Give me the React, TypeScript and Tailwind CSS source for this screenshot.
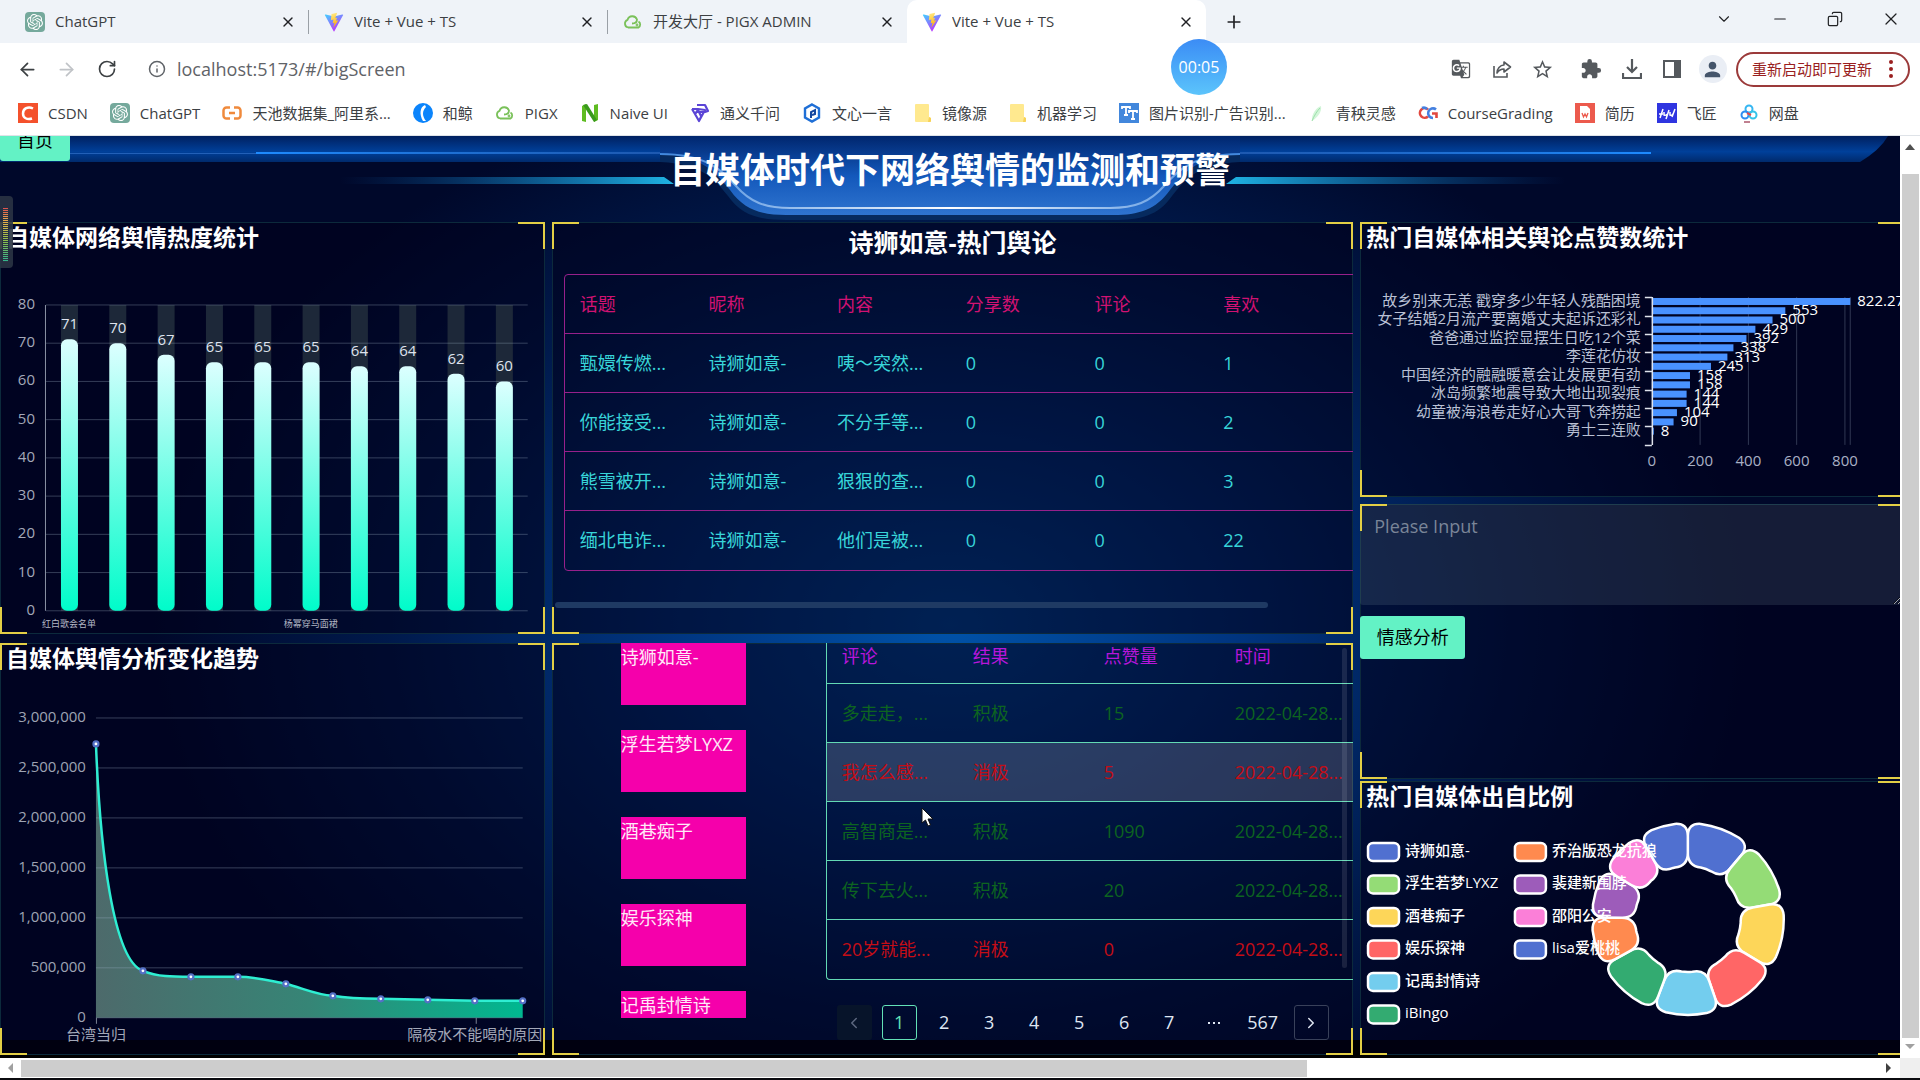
import type { ReactNode } from 'react';
import {
  ArrowLeft,
  ArrowRight,
  ChevronDown,
  ChevronLeft,
  ChevronRight,
  Copy,
  Info,
  Minus,
  Plus,
  RotateCw,
  X,
} from 'lucide-react';
import { MdExtension, MdGTranslate, MdPerson, MdStarBorder } from 'react-icons/md';
import { SiOpenai } from 'react-icons/si';

/* ---------- small site icons ---------- */

const GptIcon = () => (
  <span className="flex h-5 w-5 items-center justify-center rounded bg-[#75a99c] text-white">
    <SiOpenai size={16} />
  </span>
);

const ViteIcon = () => (
  <svg width="20" height="20" viewBox="0 0 32 32">
    <defs>
      <linearGradient id="viteA" x1="0" y1="0" x2="0.6" y2="1">
        <stop offset="0" stopColor="#41d1ff" />
        <stop offset="1" stopColor="#bd34fe" />
      </linearGradient>
      <linearGradient id="viteB" x1="0.4" y1="0" x2="0.6" y2="1">
        <stop offset="0" stopColor="#ffea83" />
        <stop offset="1" stopColor="#ffa800" />
      </linearGradient>
    </defs>
    <path d="M30 6 17 30a1 1 0 0 1-2 0L2 6a1 1 0 0 1 1-2l13 3 13-3a1 1 0 0 1 1 2z" fill="url(#viteA)" />
    <path d="M21 1 12 3l-1 10 4-1-1 6 3-1-2 8 8-12-4 1 2-5-3 1z" fill="url(#viteB)" />
  </svg>
);

const CloudIcon = () => (
  <svg width="20" height="20" viewBox="0 0 20 20" fill="none" stroke="#7ac15a" strokeWidth="1.8">
    <path d="M5 15.500a4 4 0 0 1-.5-7.600A5 5 0 0 1 14 7.500c0 3-2 4-5 4M5 15.500h10.500a3.500 3.500 0 0 0 0-6" />
    <circle cx="14" cy="13" r="0.500" />
  </svg>
);

const CsdnIcon = () => (
  <svg width="20" height="20" viewBox="0 0 20 20">
    <rect width="20" height="20" fill="#f4512c" />
    <path d="M15 5.500c-5-2.500-10 0-10 5 0 4.500 4 6.500 9 5" fill="none" stroke="#fff" strokeWidth="2.500" />
  </svg>
);

const TianchiIcon = () => (
  <svg width="20" height="20" viewBox="0 0 20 20" fill="none" stroke="#f08a3c" strokeWidth="2.500">
    <path d="M8 4.500H4.500A3 3 0 0 0 1.500 7.500v5a3 3 0 0 0 3 3H8M12 4.500h3.500a3 3 0 0 1 3 3v5a3 3 0 0 1-3 3H12M7 10h6" />
  </svg>
);

const WhaleIcon = () => (
  <svg width="20" height="20" viewBox="0 0 20 20">
    <circle cx="10" cy="10" r="10" fill="#0b84fb" />
    <path d="M12 2C7 4 6 11 10 18h3C9 13 9 8 13 4z" fill="#fff" />
  </svg>
);

const NaiveIcon = () => (
  <svg width="20" height="20" viewBox="0 0 20 20">
    <path d="M2 3l4-2v18l-4-1zM14 2l4-1v16l-4 2z" fill="#5fbc21" />
    <path d="M3 2l4-1 10 16-3 2z" fill="#3a9a1c" />
  </svg>
);

const TongyiIcon = () => (
  <svg width="20" height="20" viewBox="0 0 20 20" fill="none" stroke="#5b45d6" strokeWidth="2.200" strokeLinejoin="round">
    <path d="M7 2h8l3 6-3 1-7 0M2 6h6l7 1-6 11M2 6l3 5 3-4 3 6M5 11l4 7 3-6" />
  </svg>
);

const YiyanIcon = () => (
  <svg width="20" height="20" viewBox="0 0 20 20" fill="none" stroke="#1f6fd6" strokeWidth="2.400">
    <path d="M10 1.500l7 4v9l-7 4-7-4v-9z" />
    <path d="M9 15V9l4-2v4l-3 1" stroke="#15479f" strokeWidth="2" />
  </svg>
);

const FolderIcon = () => (
  <svg width="18" height="20" viewBox="0 0 18 20">
    <path d="M2 1h12a1 1 0 0 1 1 1v12l2 1v3a1 1 0 0 1-1 1H2a1 1 0 0 1-1-1V2a1 1 0 0 1 1-1z" fill="#ffe98f" />
    <path d="M15 14l2 1v3a1 1 0 0 1-1 1h-2z" fill="#f7d257" />
  </svg>
);

const TtIcon = () => (
  <svg width="20" height="20" viewBox="0 0 20 20">
    <rect width="20" height="20" fill="#4287dc" />
    <path d="M3 6V4h8v2M7 4v8M5 12h4M10 10V8h8v2M14 8v8M12 16h4" fill="none" stroke="#fff" strokeWidth="1.800" />
  </svg>
);

const LeafIcon = () => (
  <svg width="18" height="20" viewBox="0 0 18 20">
    <path d="M4 18C3 11 9 4 13 3c1 6-3 11-9 15z" fill="#d3f5d9" />
    <path d="M4 18c2-5 5-10 8-13" stroke="#9be0aa" fill="none" />
  </svg>
);

const CgIcon = () => (
  <svg width="20" height="20" viewBox="0 0 20 20" fill="none" strokeWidth="2.600">
    <path d="M10 6.500a4.800 4.800 0 1 0 0 7" stroke="#e2483f" />
    <path d="M18 6.500a4.800 4.800 0 1 0-3 8.500M4 5a4.500 4.500 0 0 1 5 1" stroke="#4480e0" />
    <path d="M14 10.500h4.500V15" stroke="#e2483f" />
  </svg>
);

const WpsIcon = () => (
  <svg width="20" height="20" viewBox="0 0 20 20">
    <rect width="20" height="20" fill="#ec5a4d" />
    <path d="M5 3h7l3 3v11H5z" fill="#fff" />
    <path d="M7 10l1.500 4 1.500-3 1.500 3L13 10" fill="none" stroke="#ec5a4d" strokeWidth="1.300" />
  </svg>
);

const FeijiangIcon = () => (
  <svg width="20" height="20" viewBox="0 0 20 20">
    <rect width="20" height="20" fill="#2f35e0" />
    <path d="M2 11h4M3 15l3-9M7 9v3q2 1 3-1M9 16l3-9M13 9v3q2 1 3-1M15 14l3-8" stroke="#fff" strokeWidth="1.500" fill="none" />
  </svg>
);

const PanIcon = () => (
  <svg width="20" height="20" viewBox="0 0 20 20" fill="none" strokeWidth="2">
    <circle cx="10" cy="6" r="3.500" stroke="#35b6f2" />
    <circle cx="6" cy="12" r="3.500" stroke="#2d8cf0" />
    <circle cx="14" cy="12" r="3.500" stroke="#35c3e8" />
    <path d="M8 10l4 2" stroke="#e5484d" />
    <path d="M5 19h6" stroke="#c08090" />
  </svg>
);

/* ---------- browser chrome ---------- */

const tabs = [
  { title: 'ChatGPT', icon: <GptIcon /> },
  { title: 'Vite + Vue + TS', icon: <ViteIcon /> },
  { title: '开发大厅 - PIGX ADMIN', icon: <CloudIcon /> },
  { title: 'Vite + Vue + TS', icon: <ViteIcon />, active: true },
];

const bookmarks = [
  { name: 'CSDN', icon: <CsdnIcon /> },
  { name: 'ChatGPT', icon: <GptIcon /> },
  { name: '天池数据集_阿里系...', icon: <TianchiIcon /> },
  { name: '和鲸', icon: <WhaleIcon /> },
  { name: 'PIGX', icon: <CloudIcon /> },
  { name: 'Naive UI', icon: <NaiveIcon /> },
  { name: '通义千问', icon: <TongyiIcon /> },
  { name: '文心一言', icon: <YiyanIcon /> },
  { name: '镜像源', icon: <FolderIcon /> },
  { name: '机器学习', icon: <FolderIcon /> },
  { name: '图片识别-广告识别...', icon: <TtIcon /> },
  { name: '青秧灵感', icon: <LeafIcon /> },
  { name: 'CourseGrading', icon: <CgIcon /> },
  { name: '简历', icon: <WpsIcon /> },
  { name: '飞匠', icon: <FeijiangIcon /> },
  { name: '网盘', icon: <PanIcon /> },
];

function TabStrip() {
  return (
    <div className="flex h-[43px] items-stretch bg-[#eff3f8] pl-[10px] text-[15px] text-[#3c4043]">
      {tabs.map((tab, i) => (
        <div
          key={i}
          className={
            tab.active
              ? 'flex w-[299px] items-center rounded-t-[10px] bg-white pr-[12px] pl-[15px]'
              : 'flex w-[299px] items-center pr-[12px] pl-[15px]'
          }
        >
          <span className="mr-[10px] flex w-5 justify-center">{tab.icon}</span>
          <span className="flex-1 truncate">{tab.title}</span>
          <button aria-label="关闭标签页" className="text-[#202124]">
            <X size={16} />
          </button>
          {i < 2 && <span className="ml-[12px] -mr-[12px] h-6 w-px bg-[#9aa0a6]" />}
        </div>
      ))}
      <button aria-label="新标签页" className="ml-[18px] text-[#202124]">
        <Plus size={20} />
      </button>
      <div className="ml-auto flex items-center gap-[38px] pr-[19px] pb-[6px] text-[#202124]">
        <button aria-label="搜索标签页"><ChevronDown size={18} strokeWidth={1.500} /></button>
        <button aria-label="最小化"><Minus size={18} strokeWidth={1.500} /></button>
        <button aria-label="还原"><Copy size={16} strokeWidth={1.800} className="-scale-x-100" /></button>
        <button aria-label="关闭"><X size={20} strokeWidth={1.500} /></button>
      </div>
    </div>
  );
}

function Toolbar() {
  return (
    <div className="relative flex h-[52px] items-center bg-white pr-[10px] pl-[17px] text-[#5f6368]">
      <button aria-label="后退" className="text-[#3c4043]"><ArrowLeft size={21} /></button>
      <button aria-label="前进" className="ml-[18px] text-[#c0c3c7]"><ArrowRight size={21} /></button>
      <button aria-label="重新加载" className="ml-[20px] text-[#3c4043]"><RotateCw size={20} /></button>
      <Info size={18} className="ml-[31px]" />
      <input
        aria-label="地址"
        defaultValue="localhost:5173/#/bigScreen"
        className="ml-[11px] min-w-0 flex-1 bg-transparent text-[18px] outline-none"
      />
      <div className="flex items-center text-[#55595d]">
        <button aria-label="翻译"><MdGTranslate size={20} /></button>
        <button aria-label="分享" className="ml-[21px]">
          <svg width="20" height="20" viewBox="0 0 20 20" fill="none" stroke="currentColor" strokeWidth="1.600">
            <path d="M2 7v11h13v-4" />
            <path d="M12 3l6.500 5-6.500 5v-3c-3 0-5 1-7 4 0-4 3-8 7-8z" strokeLinejoin="round" />
          </svg>
        </button>
        <button aria-label="收藏" className="ml-[19px]"><MdStarBorder size={23} /></button>
        <button aria-label="扩展程序" className="ml-[26px]"><MdExtension size={22} /></button>
        <button aria-label="下载" className="ml-[20px]">
          <svg width="20" height="20" viewBox="0 0 20 20" fill="none" stroke="currentColor" strokeWidth="2.200">
            <path d="M10 0v12M5 8l5 5 5-5M1 14v5h18v-5" />
          </svg>
        </button>
        <button aria-label="侧边栏" className="ml-[21px]">
          <svg width="18" height="18" viewBox="0 0 18 18">
            <path d="M1 1h16v16H1z" fill="none" stroke="currentColor" strokeWidth="2" />
            <path d="M11 1h6v16h-6z" fill="currentColor" />
          </svg>
        </button>
        <button aria-label="个人资料" className="ml-[18px] flex h-7 w-7 items-center justify-center rounded-full bg-[#eaeef5] text-[#44546a]">
          <MdPerson size={23} />
        </button>
        <button className="ml-[9px] flex h-[35px] items-center rounded-full border-2 border-[#9b3a3a] pr-[15px] pl-[14px] text-[15px] text-[#9a1f1f]">
          重新启动即可更新
          <svg width="4" height="18" viewBox="0 0 4 18" fill="currentColor" className="ml-[17px]">
            <circle cx="2" cy="2" r="2" />
            <circle cx="2" cy="9" r="2" />
            <circle cx="2" cy="16" r="2" />
          </svg>
        </button>
      </div>
      {/* screen recorder bubble */}
      <div className="absolute top-[-4px] left-[1171px] flex h-14 w-14 items-center justify-center rounded-full bg-linear-to-b from-[#3c8cf5] to-[#5cc4fb] text-[16px] text-white">
        00:05
      </div>
    </div>
  );
}

function BookmarkBar() {
  return (
    <nav className="flex h-[41px] items-center gap-[22px] overflow-hidden border-b border-[#dfe3e8] bg-white pb-[4px] pl-[18px] text-[15px] text-[#3c4043]">
      {bookmarks.map((b, i) => (
        <a key={i} href="#" className="flex shrink-0 items-center gap-[10px] whitespace-nowrap">
          {b.icon}
          {b.name}
        </a>
      ))}
    </nav>
  );
}

/* ---------- dashboard ---------- */

function Panel({ className = '', children }: { className?: string; children: ReactNode }) {
  return (
    <section className={`relative overflow-hidden bg-[#00001a]/60 shadow-[inset_0_0_0_1px_#0c2a3c] ${className}`}>
      {children}
      <i className="pointer-events-none absolute top-0 left-0 h-[27px] w-[27px] border-t-2 border-l-2 border-[#e3cf45]" />
      <i className="pointer-events-none absolute top-0 right-0 h-[27px] w-[27px] border-t-2 border-r-2 border-[#e3cf45]" />
      <i className="pointer-events-none absolute bottom-0 left-0 h-[27px] w-[27px] border-b-2 border-l-2 border-[#e3cf45]" />
      <i className="pointer-events-none absolute right-0 bottom-0 h-[27px] w-[27px] border-r-2 border-b-2 border-[#e3cf45]" />
    </section>
  );
}

const PanelTitle = ({ children }: { children: ReactNode }) => (
  <h2 className="pl-[6px] text-[23px] leading-[30px] font-bold text-white">{children}</h2>
);

function Banner() {
  return (
    <header className="relative h-[86px]">
      <svg className="absolute inset-0 h-full w-full" viewBox="0 0 1900 86" preserveAspectRatio="none">
        <defs>
          <linearGradient id="band" x1="0" y1="0" x2="0" y2="1">
            <stop offset="0" stopColor="#002060" />
            <stop offset="0.6" stopColor="#00409a" />
            <stop offset="1" stopColor="#002a6c" />
          </linearGradient>
          <linearGradient id="tray" x1="0" y1="0" x2="0" y2="1">
            <stop offset="0" stopColor="#00266e" />
            <stop offset="0.5" stopColor="#1358bb" />
            <stop offset="1" stopColor="#2f74cf" />
          </linearGradient>
          <linearGradient id="lineL">
            <stop offset="0" stopColor="#1e8bff" />
            <stop offset="1" stopColor="#2a62b8" stopOpacity="0.700" />
          </linearGradient>
          <linearGradient id="lineR">
            <stop offset="0" stopColor="#2a62b8" stopOpacity="0.700" />
            <stop offset="1" stopColor="#1e8bff" />
          </linearGradient>
          <linearGradient id="cyanL">
            <stop offset="0" stopColor="#0a5cb0" stopOpacity="0" />
            <stop offset="1" stopColor="#1fb4e4" />
          </linearGradient>
          <linearGradient id="cyanR">
            <stop offset="0" stopColor="#1fb4e4" />
            <stop offset="1" stopColor="#0a5cb0" stopOpacity="0" />
          </linearGradient>
          <linearGradient id="trayEdge">
            <stop offset="0" stopColor="#3f86dc" />
            <stop offset="0.5" stopColor="#ffffff" />
            <stop offset="1" stopColor="#3f86dc" />
          </linearGradient>
        </defs>
        <path d="M0 0H1888Q1880 14 1860 26H0z" fill="url(#band)" />
        <path d="M0 17H256V18H0z" fill="#2260b8" />
        <path d="M256 16H680V18H256z" fill="url(#lineL)" />
        <path d="M1220 16H1651V18H1220z" fill="url(#lineR)" />
        <path d="M340 41H664L674 48H340z" fill="url(#cyanL)" />
        <path d="M1236 41H1565V48H1226z" fill="url(#cyanR)" />
        <path d="M660 0H1240V26C1194 28 1184 46 1172 60C1158 80 1140 84 1114 84H786C760 84 742 80 728 60C716 46 706 28 660 26z" fill="#062a5e" />
        <path d="M660 0H1240V18C1194 20 1182 40 1170 54C1156 74 1138 79 1114 79H786C762 79 744 74 730 54C718 40 706 20 660 18z" fill="url(#tray)" />
        <path d="M660 18C706 18 722 34 736 50C750 66 765 72 790 72H1110C1135 72 1150 66 1164 50C1178 34 1194 18 1240 18" fill="none" stroke="url(#trayEdge)" strokeWidth="2" />
      </svg>
      <h1 className="relative pt-[12px] text-center text-[35px] leading-[44px] font-bold text-white">
        自媒体时代下网络舆情的监测和预警
      </h1>
      <button className="absolute top-0 left-0 h-[25px] w-[70px] rounded-b-[3px] bg-[#63f2c5] text-[18px] leading-[8px] text-black">
        <span className="block h-full overflow-hidden">首页</span>
      </button>
    </header>
  );
}

const heatData = [71, 70, 67, 65, 65, 65, 64, 64, 62, 60];

function HeatChart() {
  return (
    <svg viewBox="0 30 545 382" className="block w-full" fontSize="15">
      <defs>
        <linearGradient id="heat" x1="0" y1="0" x2="0" y2="1">
          <stop offset="0" stopColor="#dcffff" />
          <stop offset="1" stopColor="#00fcca" />
        </linearGradient>
      </defs>
      {heatData.map((_, i) => (
        <rect key={i} x={61 + i * 48.35} y="83" width="17" height="306" fill="#1d2839" />
      ))}
      {[0, 10, 20, 30, 40, 50, 60, 70, 80].map((v) => {
        const y = 389 - v * 3.825;
        return (
          <g key={v}>
            <path d={`M46 ${y}H528`} stroke="#a0b4c8" strokeOpacity="0.330" />
            <text x="35" y={y + 4} textAnchor="end" fill="#a3a8b8">{v}</text>
          </g>
        );
      })}
      <path d="M45.500 83V389" stroke="#8b93a5" />
      {heatData.map((v, i) => {
        const x = 61 + i * 48.35;
        const h = v * 3.825;
        return (
          <g key={i}>
            <rect x={x} y={389 - h} width="17" height={h} rx="6" fill="url(#heat)" />
            <text x={x + 8.5} y={389 - h - 10} textAnchor="middle" fill="#dfe3ee">{v}</text>
          </g>
        );
      })}
      <g fontSize="9" textAnchor="middle" fill="#b4b8c5">
        <text x="69" y="405">红白歌会名单</text>
        <text x="311" y="405">杨幂穿马面裙</text>
      </g>
    </svg>
  );
}

const trendPoints = [
  [96, 101], [143, 328], [191, 334], [238, 334], [286, 341],
  [333, 353], [381, 356], [428, 357], [475, 358], [523, 358],
];
const trendLine =
  'M96 101C100 205 113 318 143 328C158 334 172 334 191 334H238C258 334 270 338 286 341C302 345 316 352 333 353C350 356 365 356 381 356L428 357L475 358H523';

function TrendChart() {
  return (
    <svg viewBox="0 30 545 382" className="block w-full" fontSize="15">
      <defs>
        <linearGradient id="trend">
          <stop offset="0" stopColor="#4d6a6b" />
          <stop offset="0.5" stopColor="#368576" />
          <stop offset="1" stopColor="#00b890" />
        </linearGradient>
      </defs>
      <path d={`${trendLine}V375H96z`} fill="url(#trend)" />
      {[0, 1, 2, 3, 4, 5, 6].map((n) => (
        <g key={n}>
          <path d={`M96 ${375 - n * 50}H523`} stroke="#a0b4c8" strokeOpacity="0.350" />
          <text x="86" y={379 - n * 50} textAnchor="end" fill="#9ea3b3">
            {(n * 500000).toLocaleString('en-US')}
          </text>
        </g>
      ))}
      <path d="M96.500 375v6M476.500 375v6" stroke="#7b8394" />
      <path d={trendLine} fill="none" stroke="#2eeed2" strokeWidth="2.500" />
      {trendPoints.map(([x, y]) => (
        <circle key={x} cx={x} cy={y} r="2.500" fill="#fff" stroke="#5470c6" strokeWidth="2.200" />
      ))}
      <g textAnchor="middle" fill="#a3a8b8">
        <text x="96" y="397">台湾当归</text>
        <text x="475" y="397">隔夜水不能喝的原因</text>
      </g>
    </svg>
  );
}

const likeData = [822.27, 553, 500, 429, 392, 338, 313, 245, 158, 158, 144, 144, 104, 90, 8];
const likeNames = [
  '故乡别来无恙 戳穿多少年轻人残酷困境',
  '女子结婚2月流产要离婚丈夫起诉还彩礼',
  '爸爸通过监控显摆生日吃12个菜',
  '李莲花仿妆',
  '中国经济的融融暖意会让发展更有劲',
  '冰岛频繁地震导致大地出现裂痕',
  '幼童被海浪卷走好心大哥飞奔捞起',
  '勇士三连败',
];

function LikeChart() {
  return (
    <svg viewBox="0 30 545 245" className="block w-full" fontSize="15">
      {[200, 400, 600, 800, 822].map((v) => (
        <path key={v} d={`M${292 + v * 0.2415} 75V223`} stroke="#a0b4c8" strokeOpacity="0.300" />
      ))}
      {[0, 200, 400, 600, 800].map((v) => (
        <text key={v} x={292 + v * 0.2415} y="244" textAnchor="middle" fill="#a9b0c4">{v}</text>
      ))}
      {likeData.map((v, i) => (
        <rect key={i} x="292" y={76 + i * 9.27} width={v * 0.2415} height="7" fill="#4992ff" />
      ))}
      <path
        d="M292.500 75V223M285 75.500h7M285 94.500h7M285 112.500h7M285 130.500h7M285 149.500h7M285 168.500h7M285 186.500h7M285 204.500h7M285 223.500h7"
        stroke="#dfe3ec"
        strokeWidth="1.500"
        fill="none"
      />
      {likeNames.map((name, i) => (
        <text key={name} x="281" y={84 + i * 18.5} textAnchor="end" fill="#b9c0d4">{name}</text>
      ))}
      {likeData.map((v, i) => (
        <text key={i} x={299 + v * 0.2415} y={84 + i * 9.27} fill="#fff" fontWeight="500">{v}</text>
      ))}
    </svg>
  );
}

const sources = [
  { name: '诗狮如意-', color: '#5070d0', from: 0, to: 40 },
  { name: '浮生若梦LYXZ', color: '#94dc76', from: 40, to: 80 },
  { name: '酒巷痴子', color: '#fdd659', from: 80, to: 121 },
  { name: '娱乐探神', color: '#ff6666', from: 121, to: 161 },
  { name: '记禹封情诗', color: '#73cdee', from: 161, to: 201 },
  { name: 'iBingo', color: '#33ab71', from: 201, to: 241 },
  { name: '乔治版恐龙抗狼', color: '#ff8a4f', from: 241, to: 271 },
  { name: '裴建新围脖', color: '#9d5cba', from: 271, to: 301 },
  { name: '邵阳公安', color: '#fb7fd8', from: 301, to: 330 },
  { name: 'lisa爱桃桃', color: '#5070d0', from: 330, to: 360 },
];

// ring slice with rounded corners
function slice(from: number, to: number) {
  const r0 = 53;
  const r1 = 96;
  const cr = 13;
  const pt = (r: number, deg: number) => {
    const a = (deg * Math.PI) / 180;
    return `${(328 + r * Math.sin(a)).toFixed(1)} ${(138 - r * Math.cos(a)).toFixed(1)}`;
  };
  const c1 = (cr / r1) * 57.3;
  const c0 = (cr / r0) * 57.3;
  return [
    `M${pt(r1, from + c1)}`,
    `A${r1} ${r1} 0 0 1 ${pt(r1, to - c1)}`,
    `Q${pt(r1, to)} ${pt(r1 - cr, to)}`,
    `L${pt(r0 + cr, to)}`,
    `Q${pt(r0, to)} ${pt(r0, to - c0)}`,
    `A${r0} ${r0} 0 0 0 ${pt(r0, from + c0)}`,
    `Q${pt(r0, from)} ${pt(r0 + cr, from)}`,
    `L${pt(r1 - cr, from)}`,
    `Q${pt(r1, from)} ${pt(r1, from + c1)}z`,
  ].join('');
}

function SourceChart() {
  return (
    <svg viewBox="0 30 545 244" className="block w-full" fontSize="15">
      {sources.map((s) => (
        <path key={s.name} d={slice(s.from, s.to)} fill={s.color} stroke="#fff" strokeWidth="2.500" />
      ))}
      {sources.map((s, i) => {
        const x = i < 6 ? 7 : 154;
        const y = 71 + (i % 6) * 32.5;
        return (
          <g key={s.name}>
            <rect x={x + 1} y={y - 9} width="31" height="18" rx="5" fill={s.color} stroke="#fff" strokeWidth="2.500" />
            <text x={x + 38} y={y + 4} fill="#fff" fontWeight="500">{s.name}</text>
          </g>
        );
      })}
    </svg>
  );
}

const hotHead = ['话题', '昵称', '内容', '分享数', '评论', '喜欢', ''];
const hotRows = [
  ['甄嬛传燃...', '诗狮如意-', '咦～突然...', '0', '0', '1', ''],
  ['你能接受...', '诗狮如意-', '不分手等...', '0', '0', '2', ''],
  ['熊雪被开...', '诗狮如意-', '狠狠的查...', '0', '0', '3', ''],
  ['缅北电诈...', '诗狮如意-', '他们是被...', '0', '0', '22', ''],
];

function HotTable() {
  return (
    <Panel>
      <h2 className="pt-[4px] text-center text-[25px] leading-[32px] font-bold text-white">诗狮如意-热门舆论</h2>
      <div className="mt-[16px] overflow-hidden pl-[12px]">
        <table className="w-[903px] table-fixed border-separate border-spacing-0 rounded-[4px] border border-[#97208b] text-left text-[18px]">
          <thead>
            <tr className="h-[59px] text-[#d11272]">
              {hotHead.map((h, i) => (
                <th key={i} className="border-b border-[#97208b] pl-[15px] font-normal">{h}</th>
              ))}
            </tr>
          </thead>
          <tbody>
            {hotRows.map((row, r) => (
              <tr key={r} className="h-[59px] text-[#38d5d9]">
                {row.map((cell, i) => (
                  <td
                    key={i}
                    className={
                      r < hotRows.length - 1
                        ? 'border-b border-[#97208b] pl-[15px] whitespace-nowrap'
                        : 'pl-[15px] whitespace-nowrap'
                    }
                  >
                    {cell}
                  </td>
                ))}
              </tr>
            ))}
          </tbody>
        </table>
      </div>
      <div className="mt-[31px] ml-[3px] h-[6px] w-[89%] rounded bg-[#1f3a63]" />
    </Panel>
  );
}

const users = ['诗狮如意-', '浮生若梦LYXZ', '酒巷痴子', '娱乐探神', '记禹封情诗'];
const comments = [
  { text: '多走走，...', good: true, likes: 15 },
  { text: '我怎么感...', good: false, likes: 5, hover: true },
  { text: '高智商是...', good: true, likes: 1090 },
  { text: '传下去火...', good: true, likes: 20 },
  { text: '20岁就能...', good: false, likes: 0 },
];

function CommentPanel() {
  return (
    <Panel>
      <div className="flex">
        <ul className="mr-[80px] ml-[69px] flex h-[375px] w-[125px] shrink-0 flex-col gap-[25px] overflow-hidden">
          {users.map((u) => (
            <li key={u} className="h-[62px] shrink-0 bg-[#f500ab] text-[18px] leading-[28px] whitespace-nowrap text-[#ffe9f8]">
              {u}
            </li>
          ))}
        </ul>
        <div className="relative min-w-0 flex-1 overflow-hidden">
          <table className="w-[656px] table-fixed border-separate border-spacing-0 rounded-bl-[4px] border-b border-l border-[#63d9b4] text-left text-[18px]">
            <thead>
              <tr className="h-[41px] text-[#b716da]">
                {['评论', '结果', '点赞量', '时间', ''].map((h) => (
                  <th key={h} className="border-b border-[#63d9b4] pb-[14px] pl-[15px] leading-[26px] font-normal">{h}</th>
                ))}
              </tr>
            </thead>
            <tbody>
              {comments.map((c, r) => {
                const line = r < comments.length - 1 ? 'border-b border-[#63d9b4] pl-[15px]' : 'pl-[15px]';
                return (
                  <tr
                    key={c.text}
                    className={`h-[59px] whitespace-nowrap ${c.good ? 'text-[#0d6420]' : 'text-[#c40d16]'} ${c.hover ? 'bg-[#fff]/16' : ''}`}
                  >
                    <td className={line}>{c.text}</td>
                    <td className={line}>{c.good ? '积极' : '消极'}</td>
                    <td className={line}>{c.likes}</td>
                    <td className={line}>2022-04-28...</td>
                    <td className={line} />
                  </tr>
                );
              })}
            </tbody>
          </table>
          <span className="absolute top-[5px] right-[6px] h-[320px] w-[5px] rounded bg-white/10" />
          <nav className="mt-[25px] mb-[15px] ml-[11px] flex gap-[10px] text-[18px] text-[#dfe6f2]">
            <button aria-label="上一页" className="flex h-[35px] w-[35px] items-center justify-center rounded-[3px] bg-[#07142a] text-[#5d6880]">
              <ChevronLeft size={18} />
            </button>
            <button className="h-[35px] w-[35px] rounded-[3px] border border-[#63e2b7] text-[#63e2b7]">1</button>
            {['2', '3', '4', '5', '6', '7'].map((p) => (
              <button key={p} className="h-[35px] w-[35px]">{p}</button>
            ))}
            <span className="flex h-[35px] w-[35px] items-center justify-center">
              <svg width="12" height="2" viewBox="0 0 12 2" fill="currentColor">
                <path d="M0 0h2v2H0zM5 0h2v2H5zM10 0h2v2h-2z" />
              </svg>
            </span>
            <button className="h-[35px] w-[42px]">567</button>
            <button aria-label="下一页" className="flex h-[35px] w-[35px] items-center justify-center rounded-[3px] border border-[#39415a]">
              <ChevronRight size={18} />
            </button>
          </nav>
        </div>
      </div>
    </Panel>
  );
}

function Dashboard() {
  return (
    <main className="relative min-w-0 flex-1 overflow-hidden bg-black bg-[radial-gradient(ellipse_42%_62%_at_50%_54%,#0052a8_0%,#003580_35%,#001a4c_70%,#00082a_100%)] bg-[length:100%_904px] bg-no-repeat">
      <Banner />
      <div className="grid w-[calc(100%+5px)] grid-cols-[545fr_802fr_545fr] gap-x-[7px] pb-[2px]">
        <div className="flex flex-col gap-[9px]">
          <Panel>
            <PanelTitle>自媒体网络舆情热度统计</PanelTitle>
            <HeatChart />
          </Panel>
          <Panel>
            <PanelTitle>自媒体舆情分析变化趋势</PanelTitle>
            <TrendChart />
          </Panel>
        </div>
        <div className="grid grid-rows-2 gap-[9px]">
          <HotTable />
          <CommentPanel />
        </div>
        <div className="flex flex-col gap-[7px]">
          <Panel>
            <PanelTitle>热门自媒体相关舆论点赞数统计</PanelTitle>
            <LikeChart />
          </Panel>
          <div className="flex flex-1 flex-col gap-[2px]">
            <Panel className="flex-1">
              <textarea
                aria-label="评论内容"
                placeholder="Please Input"
                className="block h-[101px] w-[calc(100%-4px)] rounded-[3px] bg-[#8cb0b8]/15 px-[14px] py-[9px] text-[18px] text-white outline-none placeholder:text-[#7a8598]"
              />
              <button className="mt-[11px] h-[43px] w-[105px] rounded-[3px] bg-[#63f2c5] text-[18px] text-black">
                情感分析
              </button>
            </Panel>
            <Panel>
              <PanelTitle>热门自媒体出自比例</PanelTitle>
              <SourceChart />
            </Panel>
          </div>
        </div>
      </div>

      {/* recorder level meter docked on the left edge */}
      <div className="absolute top-[60px] left-0 h-[72px] w-[13px] rounded-r-[4px] bg-[#2a3444]/90 pt-[12px] pl-[3px]">
        <div className="h-[54px] w-[5px] bg-[repeating-linear-gradient(to_bottom,transparent_0_1px,#2a3444_1px_2px),linear-gradient(to_bottom,#e0524f,#e8b34a_25%,#8fbf4a_60%,#2fb48f)]" />
      </div>

      {/* pointer */}
      <svg className="absolute top-[671px] left-[921px]" width="14" height="21" viewBox="0 0 14 21">
        <path d="M1 1v15l3.500-3 2.500 6 2.500-1-2.500-6H12z" fill="#fff" stroke="#111" />
      </svg>
    </main>
  );
}

export default function App() {
  return (
    <div className="flex min-h-screen flex-col overflow-hidden bg-black font-['Open_Sans','Noto_Sans_CJK_SC',sans-serif]">
      <TabStrip />
      <Toolbar />
      <BookmarkBar />
      <div className="flex flex-1">
        <Dashboard />
        <div className="flex w-5 flex-col items-center bg-white">
          <svg width="12" height="38" viewBox="0 0 12 38"><path d="M1 14l5-6 5 6z" fill="#505050" /></svg>
          <div className="w-[17px] flex-1 bg-[#cdcdcd]" />
          <svg width="12" height="20" viewBox="0 0 12 20"><path d="M1 6l5 5 5-5z" fill="#a0a0a0" /></svg>
        </div>
      </div>
      <div className="flex h-[20px] items-center bg-white">
        <svg width="21" height="12" viewBox="0 0 21 12"><path d="M13 1v10L8 6z" fill="#a0a0a0" /></svg>
        <div className="h-[17px] w-[67%] bg-[#cdcdcd]" />
        <svg className="mr-[5px] ml-auto" width="12" height="12" viewBox="0 0 12 12"><path d="M3 1v10l5-5z" fill="#404040" /></svg>
        <span className="h-full w-5 bg-[#efefef]" />
      </div>
      <div className="h-[2px] bg-[#0b0b0f]" />
    </div>
  );
}
